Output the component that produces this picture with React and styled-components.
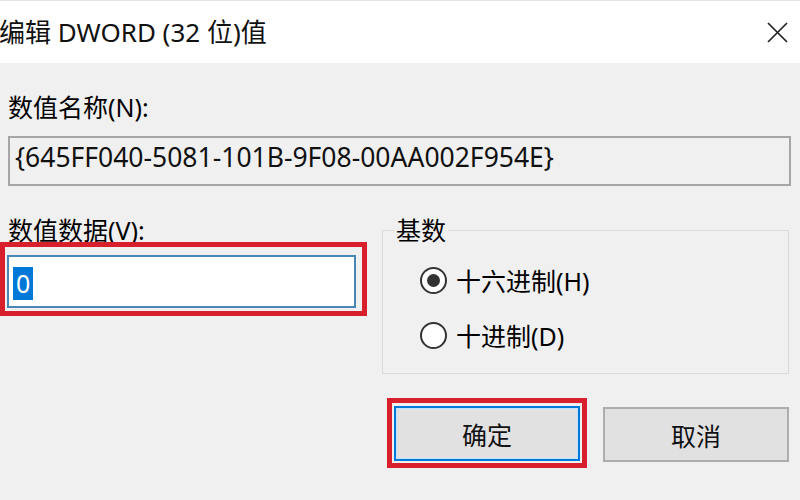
import React from "react";
import styled, { createGlobalStyle } from "styled-components";

const GlobalStyle = createGlobalStyle`
  html, body {
    margin: 0;
    padding: 0;
    background: #f0f0f0;
  }
  body {
    font-family: "Noto Sans", "Noto Sans CJK SC", sans-serif;
    color: #000;
  }
  * { box-sizing: border-box; }
`;

const Dialog = styled.div`
  width: 800px;
  height: 500px;
  overflow: hidden;
  display: flex;
  flex-direction: column;
  background: #f0f0f0;
`;

const TitleBar = styled.div`
  height: 63px;
  flex: none;
  background: #fff;
  border-top: 1px solid #e4e4e4;
  display: flex;
  align-items: center;
  justify-content: space-between;
  padding: 0 12px 0 0;
`;

const Title = styled.div`
  font-size: 26px;
  line-height: 30px;
  margin-left: -1px;
  color: #111;
  white-space: nowrap;
`;

const CloseIcon = styled.svg`
  width: 21px;
  height: 21px;
  display: block;
`;

const Body = styled.div`
  flex: 1;
  display: flex;
  flex-direction: column;
  padding: 29px 11px 0 0;
`;

const Label = styled.div`
  font-size: 25px;
  line-height: 30px;
  padding-left: ${(p) => p.$indent || 0}px;
  white-space: nowrap;
`;

const ReadOnlyBox = styled.div`
  height: 50px;
  margin: 14px -2px 0 8px;
  border: 2px solid #a6a6a6;
  background: #f0f0f0;
  display: flex;
  align-items: center;
  padding: 0 0 8px 5px;
  font-size: 26.5px;
  white-space: nowrap;
  color: #111;
`;

const Lower = styled.div`
  display: grid;
  grid-template-columns: 367px 1fr;
  column-gap: 15px;
  margin-top: 29px;
  align-items: start;
`;

const LeftColumn = styled.div`
  display: flex;
  flex-direction: column;
`;

const RedRing = styled.div`
  border: 5px solid #d8202c;
  padding: ${(p) => p.$pad};
  margin-top: ${(p) => p.$top || 0}px;
  flex: none;
`;

const TextBox = styled.div`
  height: 53px;
  border: 2px solid #4a86b4;
  background: #fff;
  display: flex;
  align-items: center;
  padding-left: 4px;
`;

const Selection = styled.span`
  background: #0078d7;
  color: #fff;
  font-size: 25px;
  line-height: 33px;
  height: 33px;
  padding: 0 3px;
  margin-top: 3px;
`;

const Group = styled.fieldset`
  margin: 0;
  padding: 0;
  min-width: 0;
  height: 159px;
  border: 1px solid #dadada;
`;

const Legend = styled.legend`
  font-size: 25px;
  line-height: 30px;
  padding: 0 2px;
  margin-left: 11px;
`;

const RadioList = styled.div`
  display: flex;
  flex-direction: column;
  gap: 25px;
  padding: 20px 0 0 37px;
`;

const RadioRow = styled.div`
  display: flex;
  align-items: center;
  gap: 9px;
  height: 30px;
  font-size: 25px;
  white-space: nowrap;
`;

const RadioCircle = styled.span`
  width: 27px;
  height: 27px;
  border-radius: 50%;
  border: 2px solid #333;
  background: #fff;
  display: flex;
  align-items: center;
  justify-content: center;
  flex: none;
  &::after {
    content: "";
    width: 13px;
    height: 13px;
    border-radius: 50%;
    background: ${(p) => (p.$checked ? "#333" : "transparent")};
  }
`;

const ButtonRow = styled.div`
  display: flex;
  justify-content: flex-end;
  align-items: flex-start;
  gap: 16px;
  margin-top: 24px;
`;

const Button = styled.div`
  width: 186px;
  height: 55px;
  margin-top: ${(p) => p.$top || 0}px;
  background: #e1e1e1;
  border: 2px solid ${(p) => (p.$default ? "#0078d7" : "#adadad")};
  box-shadow: ${(p) => (p.$default ? "inset 0 0 0 1px #bfe3ff" : "none")};
  display: flex;
  align-items: center;
  justify-content: center;
  font-size: 25px;
  color: #111;
`;

export default function App() {
  return (
    <>
      <GlobalStyle />
      <Dialog>
        <TitleBar>
          <Title>编辑 DWORD (32 位)值</Title>
          <CloseIcon viewBox="0 0 21 21">
            <path d="M1 1 L20 20 M20 1 L1 20" stroke="#222" strokeWidth="1.7" fill="none" />
          </CloseIcon>
        </TitleBar>
        <Body>
          <Label $indent={8}>数值名称(N):</Label>
          <ReadOnlyBox>{"{645FF040-5081-101B-9F08-00AA002F954E}"}</ReadOnlyBox>
          <Lower>
            <LeftColumn>
              <Label $indent={8}>数值数据(V):</Label>
              <RedRing $pad="8px 6px 3px 2px" $top={-3}>
                <TextBox>
                  <Selection>0</Selection>
                </TextBox>
              </RedRing>
            </LeftColumn>
            <Group>
              <Legend>基数</Legend>
              <RadioList>
                <RadioRow>
                  <RadioCircle $checked />
                  十六进制(H)
                </RadioRow>
                <RadioRow>
                  <RadioCircle />
                  十进制(D)
                </RadioRow>
              </RadioList>
            </Group>
          </Lower>
          <ButtonRow>
            <RedRing $pad="3px 2px 2px 2px">
              <Button $default>确定</Button>
            </RedRing>
            <Button $top={9}>取消</Button>
          </ButtonRow>
        </Body>
      </Dialog>
    </>
  );
}
